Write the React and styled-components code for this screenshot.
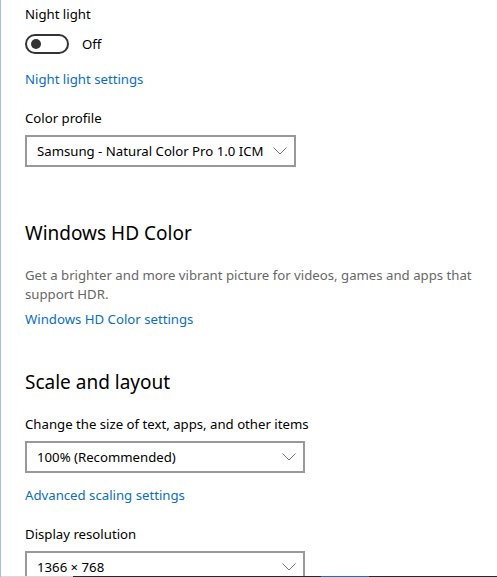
import React from 'react';
import styled, { createGlobalStyle } from 'styled-components';

const GlobalStyle = createGlobalStyle`
  html, body {
    margin: 0;
    padding: 0;
    background: #ffffff;
  }
  body {
    font-family: 'Noto Sans', 'Open Sans', sans-serif;
    color: #000000;
  }
`;

const Window = styled.div`
  width: 497px;
  height: 577px;
  overflow: hidden;
  display: flex;
  flex-direction: column;
  box-sizing: border-box;
  border-left: 1px solid #aac1cc;
`;

const Page = styled.div`
  flex: 1;
  overflow: hidden;
  padding: 4px 0 0 24px;
  display: flex;
  flex-direction: column;
  align-items: flex-start;
`;

const Taskbar = styled.div`
  height: 1px;
  flex-shrink: 0;
  background: linear-gradient(
    to right,
    #d9d9d9 0 72px,
    #1f2a33 72px 320px,
    #1f6fb3 320px 368px,
    #1f2a33 368px
  );
`;

const Label = styled.div`
  font-size: 13.2px;
  line-height: 20px;
  white-space: nowrap;
  margin-top: ${(p) => p.$gap || 0}px;
`;

const Heading = styled.h2`
  font-size: 19px;
  font-weight: 400;
  line-height: 28px;
  margin: ${(p) => p.$gap}px 0 0;
`;

const Description = styled.p`
  font-size: 13.2px;
  line-height: 19px;
  color: #676767;
  margin: ${(p) => p.$gap}px 0 0;
  max-width: 456px;
`;

const Link = styled.a`
  font-size: 13.2px;
  line-height: 20px;
  color: #0a6ec8;
  text-decoration: none;
  margin-top: ${(p) => p.$gap}px;
  cursor: pointer;
`;

const ToggleRow = styled.div`
  display: flex;
  align-items: center;
  gap: 13px;
  margin-top: 10px;
`;

const Toggle = styled.div`
  width: 44px;
  height: 20px;
  box-sizing: border-box;
  border: 2px solid #333333;
  border-radius: 10px;
  display: flex;
  align-items: center;
  padding-left: 4px;
`;

const Knob = styled.span`
  width: 10px;
  height: 10px;
  border-radius: 50%;
  background: #333333;
`;

const Combo = styled.div`
  width: ${(p) => p.$width}px;
  height: 32px;
  box-sizing: border-box;
  border: 2px solid #999999;
  margin-top: ${(p) => p.$gap}px;
  display: flex;
  align-items: center;
  justify-content: space-between;
  padding: 0 7px 0 10px;
  font-size: 13.2px;
  white-space: nowrap;
  flex-shrink: 0;
`;

const Chevron = () => (
  <svg width="14" height="8" viewBox="0 0 14 8" fill="none">
    <path d="M0.5 0.5 L7 7 L13.5 0.5" stroke="#777" strokeWidth="1" />
  </svg>
);

const App = () => (
  <>
    <GlobalStyle />
    <Window>
      <Page>
        <Label>Night light</Label>
        <ToggleRow>
          <Toggle>
            <Knob />
          </Toggle>
          <Label>Off</Label>
        </ToggleRow>
        <Link $gap={15}>Night light settings</Link>

        <Label $gap={19}>Color profile</Label>
        <Combo $width={271} $gap={7}>
          <span>Samsung - Natural Color Pro 1.0 ICM</span>
          <Chevron />
        </Combo>

        <Heading $gap={52}>Windows HD Color</Heading>
        <Description $gap={19}>
          Get a brighter and more vibrant picture for videos, games and apps that support HDR.
        </Description>
        <Link $gap={5}>Windows HD Color settings</Link>

        <Heading $gap={39}>Scale and layout</Heading>
        <Label $gap={18}>Change the size of text, apps, and other items</Label>
        <Combo $width={280} $gap={7}>
          <span>100% (Recommended)</span>
          <Chevron />
        </Combo>
        <Link $gap={12}>Advanced scaling settings</Link>

        <Label $gap={19}>Display resolution</Label>
        <Combo $width={280} $gap={7}>
          <span>1366 × 768</span>
          <Chevron />
        </Combo>
      </Page>
      <Taskbar />
    </Window>
  </>
);

export default App;
